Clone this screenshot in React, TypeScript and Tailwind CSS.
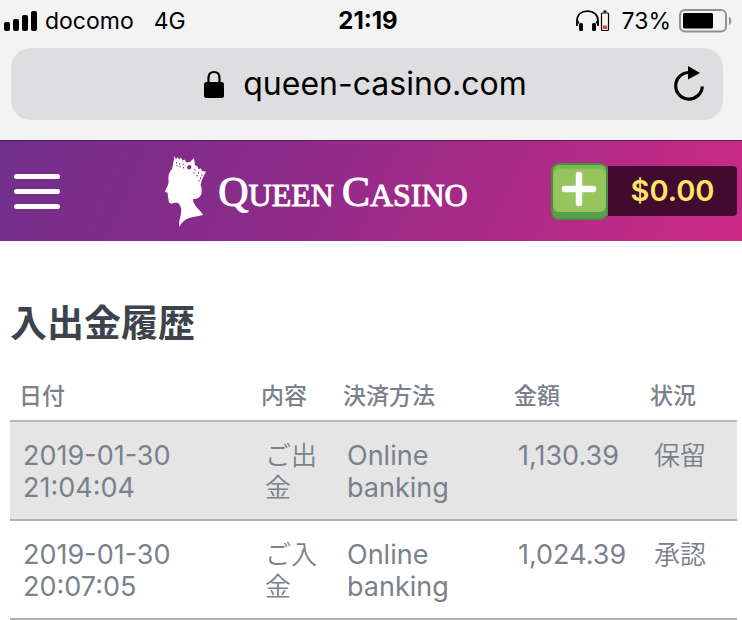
import React from "react";

type Entry = {
  date: string;
  time: string;
  kind: string;
  method: string;
  amount: string;
  status: string;
};

const entries: Entry[] = [
  { date: "2019-01-30", time: "21:04:04", kind: "ご出金", method: "Online banking", amount: "1,130.39", status: "保留" },
  { date: "2019-01-30", time: "20:07:05", kind: "ご入金", method: "Online banking", amount: "1,024.39", status: "承認" },
];

const headings = ["日付", "内容", "決済方法", "金額", "状況"];

function StatusBar() {
  return (
    <div className="grid h-10 grid-cols-[1fr_auto_1fr] items-center pl-1 pr-[10px] pt-[2px] text-[23px] text-black">
      <div className="flex items-center gap-2">
        <svg width="33" height="20" viewBox="0 0 33 20" role="img" aria-label="電波">
          <rect x="0" y="11" width="6" height="9" rx="2" />
          <rect x="9" y="8" width="6" height="12" rx="2" />
          <rect x="18" y="4" width="6" height="16" rx="2" />
          <rect x="27" y="0" width="6" height="20" rx="2" />
        </svg>
        <span>docomo</span>
        <span className="pl-3">4G</span>
      </div>
      <time className="text-2xl font-bold">21:19</time>
      <div className="flex items-center justify-end gap-2">
        <svg width="34" height="22" viewBox="0 0 34 22" fill="none" role="img" aria-label="ヘッドホン">
          <path d="M1 16V11C1 4.500 5.500 1.200 11.500 1.200S22 4.500 22 11v5" stroke="#000" strokeWidth="1.800" />
          <path d="M1 13l2-1M22 13l-2-1" stroke="#000" strokeWidth="2" />
          <rect x="3" y="13" width="4" height="8" rx="1.500" fill="#000" />
          <rect x="16" y="13" width="4" height="8" rx="1.500" fill="#000" />
          <rect x="25.500" y="3" width="7" height="17.500" rx="1" stroke="#000" strokeWidth="1.200" />
          <path d="M27.500 .5h3v2h-3z" fill="#000" />
          <path d="M27 15.500h4v3.500h-4z" fill="#e0443c" />
        </svg>
        <span className="pl-1">73%</span>
        <svg width="53" height="24" viewBox="0 0 53 24" fill="none" role="img" aria-label="バッテリー">
          <rect x="1" y="1" width="46" height="21.500" rx="5" stroke="#929292" strokeWidth="2" />
          <rect x="4" y="4" width="30" height="15.500" rx="1.500" fill="#000" />
          <path d="M50 8c3 1 3 7 0 8z" fill="#929292" />
        </svg>
      </div>
    </div>
  );
}

function AddressBar() {
  return (
    <div className="flex h-[72px] items-center rounded-[20px] bg-[#dedee0] px-4 text-black">
      <label className="flex flex-1 items-center justify-center gap-[18px] pl-8">
        <svg width="22" height="29" viewBox="0 0 22 29" fill="none" aria-hidden="true">
          <path d="M5.500 14V8C5.500 4 7.800 2 11 2s5.500 2 5.500 6v6" stroke="#000" strokeWidth="2.200" />
          <rect x="1" y="12" width="20" height="16" rx="2.500" fill="#000" />
        </svg>
        <input
          type="text"
          inputMode="url"
          aria-label="アドレス"
          defaultValue="queen-casino.com"
          className="field-sizing-content bg-transparent text-[32px] leading-10 outline-none"
        />
      </label>
      <button type="button" aria-label="再読み込み">
        <svg width="36" height="38" viewBox="0 0 36 38" fill="none">
          <path d="M17.500 7.500A13.300 13.300 0 1 0 31.300 21.500" stroke="#000" strokeWidth="3.200" />
          <path d="M17 1v13.500L29 8z" fill="#000" />
        </svg>
      </button>
    </div>
  );
}

function QueenHead() {
  return (
    <svg width="43" height="73" viewBox="0 0 43 73" fill="#fff" aria-hidden="true">
      <path d="M7 14C4 17 3 21 3.500 25C4 28 3 29 2.500 31L0 36C0 37 1.500 37.500 2.500 37.500L3 41C2.500 42.500 3.500 43 3.500 44C3.500 46 4 48.500 6 48.500C9 49 11.500 46.500 14 49C17 53 16.500 57 15.500 61C14.500 65 13.500 69 14.500 72C17 66 22 63 28 62C32 61 35 61 38 60C35 54 28 51 28 44C32 44.500 36 42 36.500 38C37 34 36.500 32 35.500 30C37.500 26 36 21 32 18L22 13Z" />
      <path d="M7 14L9.500 1L11 4.500L12.500 2L14 4.500L16 2.500L17.500 5.500L19.500 4.500L21.500 7.500L25 7L29 3L30 10L32.500 11.500L33.500 14L36 13.500L37 16L41 16.500L34 31C27 21 17 15 7 14Z" />
      <g fill="#8a2b89">
        <path d="M22 12l1.500-2 2.500.5.500 2.500-2 1.500-2-.5z" />
        <path d="M11 7h1v1.500h-1zM11.500 10h1v1.500h-1zM14 8h1v1.500h-1zM14.500 11h1v1.500h-1zM17.500 8.500h1v1.500h-1zM18 12h1v1.500h-1zM29.500 14h1v1.500h-1zM28.500 17h1v1.500h-1zM33 17h1v1.500h-1zM31.500 20h1v1.500h-1zM36.500 19.500h1v1.500h-1zM35 22.500h1v1.500h-1zM33.500 25h1v1.500h-1z" />
      </g>
    </svg>
  );
}

function SiteHeader() {
  return (
    <header className="flex h-[101px] items-center justify-between border-t border-[#55205f] bg-[linear-gradient(115deg,#722f8c_0%,#8a2b89_35%,#a92a88_65%,#cc2a85_100%)] pl-3 pr-[5px]">
      <button type="button" aria-label="メニュー" className="flex flex-col gap-[10px] px-[2px]">
        <span className="h-[5px] w-[46px] rounded-full bg-white" />
        <span className="h-[5px] w-[46px] rounded-full bg-white" />
        <span className="h-[5px] w-[46px] rounded-full bg-white" />
      </button>
      <a href="#top" className="ml-5 flex items-center gap-[10px] text-white">
        <QueenHead />
        <span className="whitespace-nowrap pt-1 font-['Liberation_Serif',serif] text-[32px] leading-[48px] [-webkit-text-stroke:1px_white]">
          <span className="text-[42px]">Q</span>UEEN <span className="text-[42px]">C</span>ASINO
        </span>
      </a>
      <div className="flex items-center">
        <button
          type="button"
          aria-label="入金"
          className="flex h-[57px] w-[57px] items-center justify-center rounded-lg border-2 border-[#4b8c46] bg-[#98c45d] pb-1 shadow-[inset_0_-6px_0_#57a04b,inset_0_4px_2px_#7ab850]"
        >
          <svg width="36" height="36" viewBox="0 0 36 36" aria-hidden="true">
            <path d="M18 4v28M4 18h28" stroke="#fff" strokeWidth="6.500" strokeLinecap="round" />
          </svg>
        </button>
        <span className="flex h-[50px] w-[129px] items-center justify-center rounded-r bg-[#400b2e] text-[29px] font-semibold text-[#ffe566]">
          $0.00
        </span>
      </div>
    </header>
  );
}

function HistoryTable() {
  return (
    <table className="w-full table-fixed border-collapse text-left text-[#7b818a]">
      <colgroup>
        <col />
        <col className="w-[82px]" />
        <col className="w-[171px]" />
        <col className="w-[136px]" />
        <col className="w-[96px]" />
      </colgroup>
      <thead>
        <tr className="border-b-2 border-[#b9b9b9]">
          {headings.map((h) => (
            <th key={h} scope="col" className="whitespace-nowrap px-[9px] pb-2 text-[23px] font-medium leading-8">
              {h}
            </th>
          ))}
        </tr>
      </thead>
      <tbody className="align-top text-[27px] leading-8">
        {entries.map((e) => (
          <tr key={e.time} className="border-b-2 border-[#b1b1b1] odd:bg-[#e5e5e5]">
            <td className="px-[13px] pb-[15px] pt-[18px]">
              {e.date} {e.time}
            </td>
            <td className="px-[13px] pb-[15px] pt-[18px] text-[26px] font-[350]">{e.kind}</td>
            <td className="px-[13px] pb-[15px] pt-[18px]">{e.method}</td>
            <td className="whitespace-nowrap px-[13px] pb-[15px] pt-[18px]">{e.amount}</td>
            <td className="whitespace-nowrap px-[13px] pb-[15px] pt-[18px] text-[26px] font-[350]">{e.status}</td>
          </tr>
        ))}
      </tbody>
    </table>
  );
}

export default function App() {
  return (
    <div className="min-h-screen bg-white font-['Inter','Noto_Sans_CJK_JP',sans-serif]">
      <div className="bg-[#f3f3f3] pb-5">
        <StatusBar />
        <div className="pl-[11px] pr-[19px] pt-2">
          <AddressBar />
        </div>
      </div>
      <SiteHeader />
      <main className="pl-[10px] pr-[5px] pt-[59px]">
        <h1 className="text-[37px] font-bold leading-[48px] text-[#3d434c]">入出金履歴</h1>
        <div className="pt-8">
          <HistoryTable />
        </div>
      </main>
    </div>
  );
}
